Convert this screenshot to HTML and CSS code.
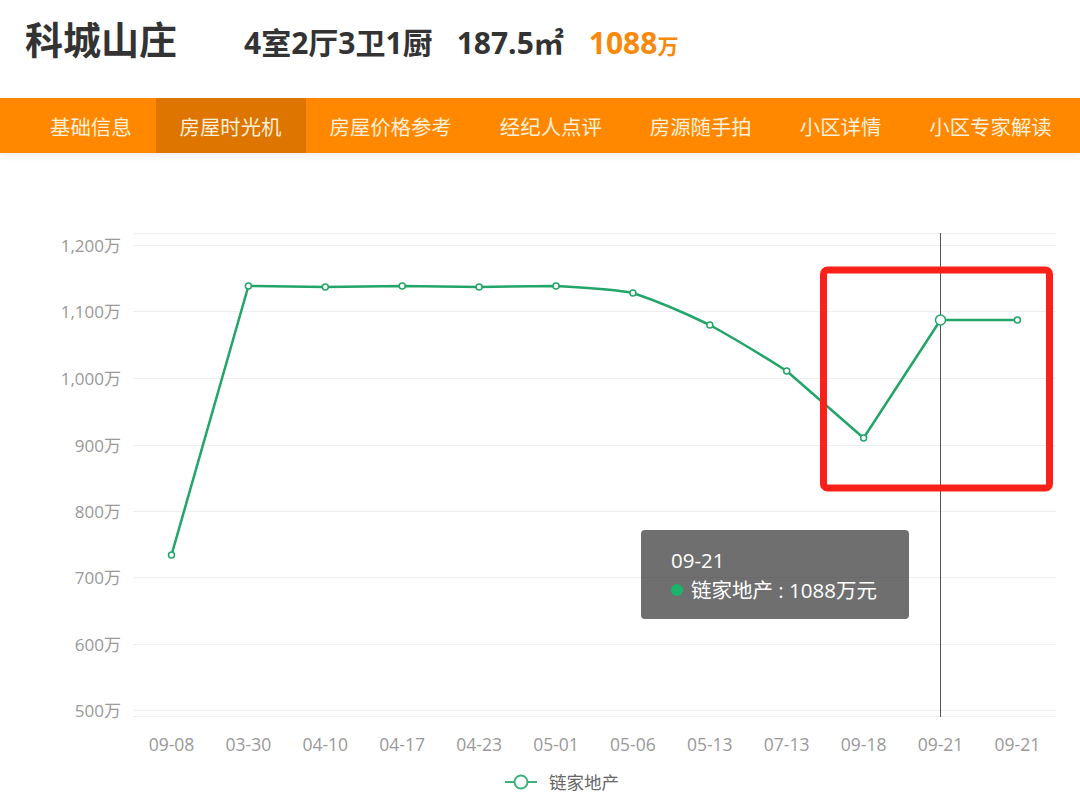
FILE: index.html
```html
<!DOCTYPE html>
<html lang="zh-CN">
<head>
  <meta charset="UTF-8">
  <title>科城山庄 - 房屋时光机</title>
  <link rel="stylesheet" href="styles.css">
</head>
<body>
  <div class="header">
    <h1 class="house-name">科城山庄</h1>
    <p class="house-info">4室2厅3卫1厨<span class="area">187.5㎡</span><span class="price">1088<small>万</small></span></p>
  </div>

  <div class="nav">
    <a class="nav-item">基础信息</a>
    <a class="nav-item active">房屋时光机</a>
    <a class="nav-item">房屋价格参考</a>
    <a class="nav-item">经纪人点评</a>
    <a class="nav-item">房源随手拍</a>
    <a class="nav-item">小区详情</a>
    <a class="nav-item">小区专家解读</a>
  </div>

  <div class="chart-box">
    <svg class="chart" width="1080" height="610" viewBox="0 153 1080 610">
      <!-- grid -->
      <g class="grid">
        <line x1="133" y1="233.5" x2="1056" y2="233.5"/>
        <line x1="133" y1="245.5" x2="1056" y2="245.5"/>
        <line x1="133" y1="311.5" x2="1056" y2="311.5"/>
        <line x1="133" y1="378.5" x2="1056" y2="378.5"/>
        <line x1="133" y1="445.5" x2="1056" y2="445.5"/>
        <line x1="133" y1="511.5" x2="1056" y2="511.5"/>
        <line x1="133" y1="577.5" x2="1056" y2="577.5"/>
        <line x1="133" y1="644.5" x2="1056" y2="644.5"/>
        <line x1="133" y1="710.5" x2="1056" y2="710.5"/>
        <line x1="133" y1="716.5" x2="1056" y2="716.5"/>
      </g>
      <g class="y-labels">
        <text x="121" y="245">1,200万</text>
        <text x="121" y="311">1,100万</text>
        <text x="121" y="378">1,000万</text>
        <text x="121" y="445">900万</text>
        <text x="121" y="511">800万</text>
        <text x="121" y="577">700万</text>
        <text x="121" y="644">600万</text>
        <text x="121" y="710">500万</text>
      </g>
      <g class="x-labels">
        <text x="171.5" y="744">09-08</text>
        <text x="248.4" y="744">03-30</text>
        <text x="325.3" y="744">04-10</text>
        <text x="402.2" y="744">04-17</text>
        <text x="479.1" y="744">04-23</text>
        <text x="556" y="744">05-01</text>
        <text x="632.9" y="744">05-06</text>
        <text x="709.8" y="744">05-13</text>
        <text x="786.7" y="744">07-13</text>
        <text x="863.6" y="744">09-18</text>
        <text x="940.5" y="744">09-21</text>
        <text x="1017.4" y="744">09-21</text>
      </g>
      <line class="pointer" x1="940.5" y1="233" x2="940.5" y2="717"/>
      <path class="series" d="M171.5 555 L248.4 286 L325.3 287 L402.2 286 L479.1 287 L556 286 C590 288 612 289 632.9 293 C660 302 685 313 709.8 325 C737 340 760 354 786.7 371 L863.6 438 L940.5 320 L1017.4 320"/>
      <g class="dots">
        <circle cx="171.5" cy="555" r="3"/>
        <circle cx="248.4" cy="286" r="3"/>
        <circle cx="325.3" cy="287" r="3"/>
        <circle cx="402.2" cy="286" r="3"/>
        <circle cx="479.1" cy="287" r="3"/>
        <circle cx="556" cy="286" r="3"/>
        <circle cx="632.9" cy="293" r="3"/>
        <circle cx="709.8" cy="325" r="3"/>
        <circle cx="786.7" cy="371" r="3"/>
        <circle cx="863.6" cy="438" r="3"/>
        <circle cx="940.5" cy="320" r="5"/>
        <circle cx="1017.4" cy="320" r="3"/>
      </g>
      <rect class="mark" x="823.5" y="270" width="226" height="218" rx="4"/>
    </svg>

    <div class="tooltip">
      <div class="tip-date">09-21</div>
      <div class="tip-row"><span class="tip-dot"></span>链家地产 : 1088万元</div>
    </div>

    <div class="legend">
      <svg width="32" height="16" viewBox="0 0 32 16">
        <line x1="0" y1="8" x2="32" y2="8" stroke="#3bb27c" stroke-width="2"/>
        <circle cx="16" cy="8" r="6.5" fill="#fff" stroke="#3bb27c" stroke-width="2"/>
      </svg>
      <span>链家地产</span>
    </div>
  </div>
</body>
</html>
```

FILE: styles.css
```css
body {
  margin: 0;
  background: #fff;
  font-family: "Open Sans", "Noto Sans CJK SC", sans-serif;
  width: 1080px;
  overflow: hidden;
}
.header {
  display: flex;
  align-items: baseline;
  height: 98px;
  box-sizing: border-box;
  padding: 10px 0 0 25px;
}
.house-name {
  margin: 0;
  font-family: "Noto Sans CJK SC", sans-serif;
  font-size: 38px;
  font-weight: 700;
  color: #333;
  line-height: 56px;
}
.house-info {
  margin: 0 0 0 67px;
  font-size: 30px;
  font-weight: 700;
  color: #333;
}
.area {
  margin-left: 24px;
}
.price {
  margin-left: 25px;
  color: #f7890c;
}
.price small {
  font-size: 21px;
}
.nav {
  display: flex;
  height: 55px;
  background: #ff8800;
  padding-left: 26px;
  box-shadow: 0 4px 6px rgba(0, 0, 0, 0.06);
  position: relative;
}
.nav-item {
  display: flex;
  align-items: center;
  padding: 0 24px;
  font-size: 20.4px;
  color: #fdf0da;
  cursor: pointer;
}
.nav-item.active {
  background: #dd7500;
}
.chart-box {
  position: relative;
}
.chart {
  display: block;
}
.grid line {
  stroke: #eee;
  stroke-width: 1;
}
.y-labels text {
  font-size: 17px;
  fill: #999;
  text-anchor: end;
  dominant-baseline: central;
}
.x-labels text {
  font-size: 17.5px;
  fill: #999;
  text-anchor: middle;
  dominant-baseline: central;
}
.pointer {
  stroke: #555;
  stroke-width: 1;
}
.series {
  fill: none;
  stroke: #21a568;
  stroke-width: 2.5;
  stroke-linejoin: round;
}
.dots circle {
  fill: #fff;
  stroke: #21a568;
  stroke-width: 1.5;
}
.mark {
  fill: none;
  stroke: #fa2218;
  stroke-width: 7;
}
.tooltip {
  position: absolute;
  left: 641px;
  top: 377px;
  width: 268px;
  height: 89px;
  box-sizing: border-box;
  padding: 15px 0 0 30px;
  background: rgba(50, 50, 50, 0.7);
  border-radius: 4px;
  color: #fff;
  font-size: 20.5px;
  line-height: 30px;
}
.tip-row {
  display: flex;
  align-items: center;
}
.tip-dot {
  width: 12px;
  height: 12px;
  border-radius: 50%;
  background: #19b36b;
  margin-right: 8px;
}
.legend {
  display: flex;
  align-items: center;
  justify-content: center;
  gap: 12px;
  margin-top: 6px;
  padding-left: 44px;
  font-family: "Noto Sans CJK SC", sans-serif;
  font-size: 17.5px;
  color: #666;
}
```
